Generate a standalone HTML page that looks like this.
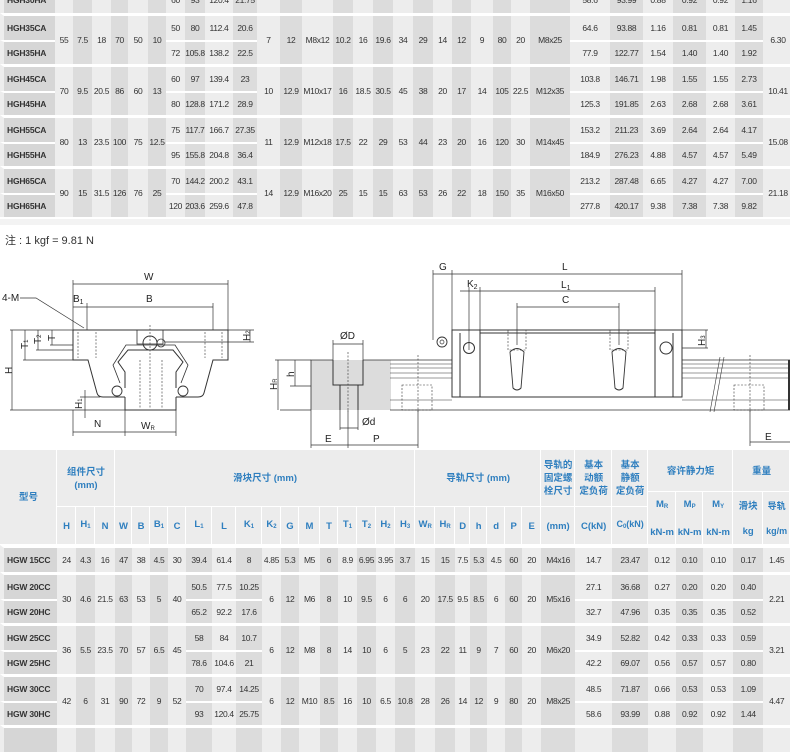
<!DOCTYPE html>
<html><head><meta charset="utf-8"><style>
*{margin:0;padding:0;box-sizing:border-box}
body{width:790px;height:728px;overflow:hidden;background:#fff;position:relative;font-family:"Liberation Sans","Noto Sans CJK SC",sans-serif;color:#333}
table{border-collapse:separate;border-spacing:0;table-layout:fixed;position:absolute;left:0;width:790px}
td{padding:0;text-align:center;vertical-align:middle;font-size:8.5px;white-space:nowrap;overflow:hidden;letter-spacing:-.35px}
col.l{background:#ededed}col.d{background:#dcdcdc}
td.m{text-align:left;font-weight:bold;background:#d6d6d6;border-left:4px solid #ededed;padding-left:3px;font-size:8.5px;letter-spacing:-.2px}
tr.g td{border-top:3px solid #fff}
tr.s td{border-top:2px solid #fff}
tr.g td,tr.f td{height:27px}
tr.s td{height:24px}
#t1 tr.g td.r2{height:51px}
#t2 tr.g td.r2{height:51px}
.h td{background:#ececec;color:#2f7fbf;font-weight:bold;font-size:9.5px;box-shadow:inset -1px 0 #fff,inset 0 -1px #fff;line-height:13px;letter-spacing:0}
.h td sub{font-size:6px;vertical-align:-1px}
.note{position:absolute;left:5px;top:232px;font-size:11px;color:#333}
</style></head><body>

<table id="t1" style="top:-14px">
<colgroup><col style="width:55px" class="l"><col style="width:18px" class="l"><col style="width:19px" class="d"><col style="width:19px" class="l"><col style="width:17px" class="d"><col style="width:20px" class="l"><col style="width:18px" class="d"><col style="width:19px" class="l"><col style="width:20px" class="d"><col style="width:28px" class="l"><col style="width:24px" class="d"><col style="width:23px" class="l"><col style="width:22px" class="d"><col style="width:31px" class="l"><col style="width:20px" class="d"><col style="width:20px" class="l"><col style="width:20px" class="d"><col style="width:20px" class="l"><col style="width:20px" class="d"><col style="width:19px" class="l"><col style="width:19px" class="d"><col style="width:22px" class="l"><col style="width:18px" class="d"><col style="width:19px" class="l"><col style="width:40px" class="d"><col style="width:40px" class="l"><col style="width:33px" class="d"><col style="width:30px" class="l"><col style="width:33px" class="d"><col style="width:29px" class="l"><col style="width:28px" class="d"><col style="width:30px" class="l"></colgroup>
<tr class="f"><td class="m">HGH30HA</td><td></td><td></td><td></td><td></td><td></td><td></td><td>60</td><td>93</td><td>120.4</td><td>21.75</td><td></td><td></td><td></td><td></td><td></td><td></td><td></td><td></td><td></td><td></td><td></td><td></td><td></td><td></td><td>58.6</td><td>93.99</td><td>0.88</td><td>0.92</td><td>0.92</td><td>1.16</td><td></td></tr>
<tr class="g"><td class="m">HGH35CA</td><td class="r2" rowspan="2">55</td><td class="r2" rowspan="2">7.5</td><td class="r2" rowspan="2">18</td><td class="r2" rowspan="2">70</td><td class="r2" rowspan="2">50</td><td class="r2" rowspan="2">10</td><td>50</td><td>80</td><td>112.4</td><td>20.6</td><td class="r2" rowspan="2">7</td><td class="r2" rowspan="2">12</td><td class="r2" rowspan="2">M8x12</td><td class="r2" rowspan="2">10.2</td><td class="r2" rowspan="2">16</td><td class="r2" rowspan="2">19.6</td><td class="r2" rowspan="2">34</td><td class="r2" rowspan="2">29</td><td class="r2" rowspan="2">14</td><td class="r2" rowspan="2">12</td><td class="r2" rowspan="2">9</td><td class="r2" rowspan="2">80</td><td class="r2" rowspan="2">20</td><td class="r2" rowspan="2">M8x25</td><td>64.6</td><td>93.88</td><td>1.16</td><td>0.81</td><td>0.81</td><td>1.45</td><td class="r2" rowspan="2">6.30</td></tr>
<tr class="s"><td class="m">HGH35HA</td><td>72</td><td>105.8</td><td>138.2</td><td>22.5</td><td>77.9</td><td>122.77</td><td>1.54</td><td>1.40</td><td>1.40</td><td>1.92</td></tr>
<tr class="g"><td class="m">HGH45CA</td><td class="r2" rowspan="2">70</td><td class="r2" rowspan="2">9.5</td><td class="r2" rowspan="2">20.5</td><td class="r2" rowspan="2">86</td><td class="r2" rowspan="2">60</td><td class="r2" rowspan="2">13</td><td>60</td><td>97</td><td>139.4</td><td>23</td><td class="r2" rowspan="2">10</td><td class="r2" rowspan="2">12.9</td><td class="r2" rowspan="2">M10x17</td><td class="r2" rowspan="2">16</td><td class="r2" rowspan="2">18.5</td><td class="r2" rowspan="2">30.5</td><td class="r2" rowspan="2">45</td><td class="r2" rowspan="2">38</td><td class="r2" rowspan="2">20</td><td class="r2" rowspan="2">17</td><td class="r2" rowspan="2">14</td><td class="r2" rowspan="2">105</td><td class="r2" rowspan="2">22.5</td><td class="r2" rowspan="2">M12x35</td><td>103.8</td><td>146.71</td><td>1.98</td><td>1.55</td><td>1.55</td><td>2.73</td><td class="r2" rowspan="2">10.41</td></tr>
<tr class="s"><td class="m">HGH45HA</td><td>80</td><td>128.8</td><td>171.2</td><td>28.9</td><td>125.3</td><td>191.85</td><td>2.63</td><td>2.68</td><td>2.68</td><td>3.61</td></tr>
<tr class="g"><td class="m">HGH55CA</td><td class="r2" rowspan="2">80</td><td class="r2" rowspan="2">13</td><td class="r2" rowspan="2">23.5</td><td class="r2" rowspan="2">100</td><td class="r2" rowspan="2">75</td><td class="r2" rowspan="2">12.5</td><td>75</td><td>117.7</td><td>166.7</td><td>27.35</td><td class="r2" rowspan="2">11</td><td class="r2" rowspan="2">12.9</td><td class="r2" rowspan="2">M12x18</td><td class="r2" rowspan="2">17.5</td><td class="r2" rowspan="2">22</td><td class="r2" rowspan="2">29</td><td class="r2" rowspan="2">53</td><td class="r2" rowspan="2">44</td><td class="r2" rowspan="2">23</td><td class="r2" rowspan="2">20</td><td class="r2" rowspan="2">16</td><td class="r2" rowspan="2">120</td><td class="r2" rowspan="2">30</td><td class="r2" rowspan="2">M14x45</td><td>153.2</td><td>211.23</td><td>3.69</td><td>2.64</td><td>2.64</td><td>4.17</td><td class="r2" rowspan="2">15.08</td></tr>
<tr class="s"><td class="m">HGH55HA</td><td>95</td><td>155.8</td><td>204.8</td><td>36.4</td><td>184.9</td><td>276.23</td><td>4.88</td><td>4.57</td><td>4.57</td><td>5.49</td></tr>
<tr class="g"><td class="m">HGH65CA</td><td class="r2" rowspan="2">90</td><td class="r2" rowspan="2">15</td><td class="r2" rowspan="2">31.5</td><td class="r2" rowspan="2">126</td><td class="r2" rowspan="2">76</td><td class="r2" rowspan="2">25</td><td>70</td><td>144.2</td><td>200.2</td><td>43.1</td><td class="r2" rowspan="2">14</td><td class="r2" rowspan="2">12.9</td><td class="r2" rowspan="2">M16x20</td><td class="r2" rowspan="2">25</td><td class="r2" rowspan="2">15</td><td class="r2" rowspan="2">15</td><td class="r2" rowspan="2">63</td><td class="r2" rowspan="2">53</td><td class="r2" rowspan="2">26</td><td class="r2" rowspan="2">22</td><td class="r2" rowspan="2">18</td><td class="r2" rowspan="2">150</td><td class="r2" rowspan="2">35</td><td class="r2" rowspan="2">M16x50</td><td>213.2</td><td>287.48</td><td>6.65</td><td>4.27</td><td>4.27</td><td>7.00</td><td class="r2" rowspan="2">21.18</td></tr>
<tr class="s"><td class="m">HGH65HA</td><td>120</td><td>203.6</td><td>259.6</td><td>47.8</td><td>277.8</td><td>420.17</td><td>9.38</td><td>7.38</td><td>7.38</td><td>9.82</td></tr>
</table>
<div style="position:absolute;left:0;top:219px;width:790px;height:6px;background:#f3f3f3"></div>
<div class="note">注 : 1 kgf = 9.81 N</div>

<svg style="position:absolute;left:0;top:250px" width="790" height="200" viewBox="0 250 790 200" font-family="Liberation Sans, sans-serif" font-size="10" fill="none" stroke="#333">
<g stroke-width=".7">
<line x1="73" y1="284" x2="228" y2="284"/><line x1="73" y1="280" x2="73" y2="330"/><line x1="228" y1="280" x2="228" y2="330"/>
<line x1="73" y1="307" x2="213" y2="307"/><line x1="87" y1="303" x2="87" y2="330"/><line x1="213" y1="303" x2="213" y2="330"/>
<polyline points="20,298 36,298 84,328"/>
<line x1="10" y1="330" x2="73" y2="330"/><line x1="10" y1="410" x2="125" y2="410"/>
<line x1="12" y1="330" x2="12" y2="410"/><line x1="25" y1="330" x2="25" y2="360"/><line x1="38" y1="330" x2="38" y2="350"/><line x1="52" y1="330" x2="52" y2="345"/>
<line x1="23" y1="360" x2="73" y2="360"/><line x1="36" y1="350" x2="73" y2="350"/><line x1="50" y1="345" x2="73" y2="345"/>
<line x1="228" y1="330" x2="254" y2="330"/><line x1="165" y1="342" x2="254" y2="342"/><line x1="250" y1="330" x2="250" y2="342"/>
<line x1="85" y1="390" x2="85" y2="418"/><line x1="80" y1="397" x2="100" y2="397"/>
<line x1="73" y1="410" x2="73" y2="436"/><line x1="125" y1="410" x2="125" y2="436"/><line x1="176" y1="410" x2="176" y2="436"/>
<line x1="73" y1="432" x2="176" y2="432"/>
</g>
<path stroke-width="1" d="M73,330 H228 V360 H213 L204,393 Q203,397 198,397 H176 M73,330 V360 H88 L97,393 Q98,397 103,397 H125"/>
<path stroke-width="1" d="M125,397 V410 H176 V397 M125,388 V372 L118,362 L128,350 H173 L183,362 L176,372 V388"/>
<path stroke-width=".8" d="M120,383 L113,365 L126,345 H175 L188,365 L181,383"/>
<rect x="137" y="330" width="26" height="14" stroke-width=".8"/>
<circle cx="150" cy="343" r="7" stroke-width="1"/><circle cx="161" cy="343" r="4" stroke-width=".8"/>
<circle cx="117" cy="391" r="5" stroke-width=".9"/><circle cx="183" cy="391" r="5" stroke-width=".9"/>
<g stroke-dasharray="2,1.5" stroke-width=".6"><line x1="78" y1="332" x2="78" y2="358"/><line x1="96" y1="332" x2="96" y2="358"/><line x1="205" y1="332" x2="205" y2="358"/><line x1="222" y1="332" x2="222" y2="358"/><line x1="140" y1="360" x2="140" y2="408"/><line x1="162" y1="360" x2="162" y2="408"/><line x1="150" y1="325" x2="150" y2="408"/></g>
<g stroke-width=".7">
<line x1="433" y1="274" x2="682" y2="274"/><line x1="433" y1="270" x2="433" y2="340"/><line x1="452" y1="270" x2="452" y2="330"/><line x1="682" y1="270" x2="682" y2="330"/>
<line x1="460" y1="291" x2="655" y2="291"/><line x1="469" y1="287" x2="469" y2="350"/><line x1="480" y1="287" x2="480" y2="330"/><line x1="655" y1="287" x2="655" y2="330"/>
<line x1="517" y1="307" x2="619" y2="307"/><line x1="517" y1="303" x2="517" y2="345"/><line x1="619" y1="303" x2="619" y2="345"/>
<line x1="682" y1="330" x2="708" y2="330"/><line x1="682" y1="348" x2="708" y2="348"/><line x1="706" y1="330" x2="706" y2="348"/>
<line x1="333" y1="344" x2="363" y2="344"/><line x1="333" y1="340" x2="333" y2="360"/><line x1="363" y1="340" x2="363" y2="360"/>
<line x1="275" y1="360" x2="311" y2="360"/><line x1="290" y1="386" x2="333" y2="386"/><line x1="280" y1="410" x2="311" y2="410"/>
<line x1="295" y1="360" x2="295" y2="386"/><line x1="278" y1="360" x2="278" y2="410"/>
<line x1="311" y1="410" x2="311" y2="448"/><line x1="348" y1="410" x2="348" y2="448"/><line x1="418" y1="410" x2="418" y2="448"/>
<line x1="311" y1="445" x2="418" y2="445"/><line x1="340" y1="428" x2="358" y2="428"/><line x1="340" y1="410" x2="340" y2="430"/><line x1="358" y1="410" x2="358" y2="430"/>
<line x1="750" y1="410" x2="750" y2="446"/><line x1="750" y1="442" x2="790" y2="442"/>
</g>
<rect x="311" y="360" width="80" height="50" fill="#dcdcdc" stroke="none"/>
<path stroke-width="1" d="M333,360 V385 H363 V360 M340,385 V410 M358,385 V410"/>
<path stroke-width=".8" d="M390,360 H452 M682,360 H790 M390,410 H790 M311,410 V360 H333 M363,360 H390"/>
<g stroke-width=".6"><line x1="390" y1="364" x2="452" y2="364"/><line x1="390" y1="368" x2="452" y2="368"/><line x1="390" y1="373" x2="452" y2="373"/><line x1="390" y1="378" x2="452" y2="378"/><line x1="390" y1="400" x2="452" y2="400"/>
<line x1="682" y1="364" x2="790" y2="364"/><line x1="682" y1="368" x2="790" y2="368"/><line x1="682" y1="373" x2="790" y2="373"/><line x1="682" y1="378" x2="790" y2="378"/><line x1="682" y1="400" x2="790" y2="400"/>
<line x1="452" y1="397" x2="682" y2="397"/><line x1="710" y1="412" x2="720" y2="357"/><line x1="714" y1="412" x2="724" y2="357"/></g>
<line x1="789" y1="360" x2="789" y2="410" stroke-width="2"/>
<path stroke-width="1" d="M452,330 H682 V397 H452 Z M480,330 V397 M655,330 V397 M460,333 V397 M673,333 V397 M480,333 H655"/>
<circle cx="469" cy="348" r="5.5" stroke-width="1"/><circle cx="666" cy="348" r="6" stroke-width="1"/>
<path stroke-width=".9" d="M510,352 Q517,345 524,352 L521,388 Q517,392 513,388 Z M612,352 Q619,345 626,352 L623,388 Q619,392 615,388 Z"/>
<g stroke-dasharray="2,1.5" stroke-width=".6"><rect x="508" y="330" width="18" height="20"/><rect x="610" y="330" width="18" height="20"/><rect x="402" y="385" width="30" height="25"/><rect x="734" y="385" width="30" height="25"/><line x1="418" y1="355" x2="418" y2="412"/><line x1="750" y1="355" x2="750" y2="412"/><line x1="348" y1="352" x2="348" y2="412"/></g>
<circle cx="442" cy="342" r="5" stroke-width=".9"/><circle cx="442" cy="342" r="2" stroke-width=".7"/>
<g fill="#222" stroke="none" font-size="10">
<text x="144" y="280">W</text><text x="146" y="302">B</text><text x="73" y="302">B<tspan font-size="7" dy="2">1</tspan></text><text x="2" y="301">4-M</text>
<text x="4" y="374" transform="rotate(-90 8 370)">H</text>
<text x="20" y="349" transform="rotate(-90 24 345)">T<tspan font-size="6">1</tspan></text>
<text x="33" y="344" transform="rotate(-90 37 340)">T<tspan font-size="6">2</tspan></text>
<text x="47" y="341" transform="rotate(-90 51 337)">T</text>
<text x="241" y="340" transform="rotate(-90 246 336)">H<tspan font-size="6">2</tspan></text>
<text x="73" y="408" transform="rotate(-90 78 404)">H<tspan font-size="6">1</tspan></text>
<text x="94" y="427">N</text><text x="141" y="429">W<tspan font-size="6" dy="1">R</tspan></text>
<text x="439" y="270">G</text><text x="562" y="270">L</text><text x="467" y="287">K<tspan font-size="7" dy="2">2</tspan></text><text x="561" y="288">L<tspan font-size="7" dy="2">1</tspan></text><text x="562" y="303">C</text>
<text x="693" y="346" transform="rotate(-90 699 340)">H<tspan font-size="6">3</tspan></text>
<text x="340" y="339">ØD</text><text x="362" y="425">Ød</text><text x="325" y="442">E</text><text x="373" y="442">P</text><text x="765" y="440">E</text>
<text x="286" y="377" transform="rotate(-90 290 373)">h</text>
<text x="268" y="389" transform="rotate(-90 273 385)">H<tspan font-size="6">R</tspan></text>
</g>
</svg>

<table id="t2" style="top:450px">
<colgroup><col style="width:57px" class="l"><col style="width:19px" class="l"><col style="width:19px" class="d"><col style="width:20px" class="l"><col style="width:17px" class="d"><col style="width:18px" class="l"><col style="width:18px" class="d"><col style="width:18px" class="l"><col style="width:26px" class="d"><col style="width:24px" class="l"><col style="width:26px" class="d"><col style="width:19px" class="l"><col style="width:18px" class="d"><col style="width:21px" class="l"><col style="width:18px" class="d"><col style="width:19px" class="l"><col style="width:19px" class="d"><col style="width:19px" class="l"><col style="width:20px" class="d"><col style="width:20px" class="l"><col style="width:20px" class="d"><col style="width:15px" class="l"><col style="width:17px" class="d"><col style="width:18px" class="l"><col style="width:17px" class="d"><col style="width:19px" class="l"><col style="width:34px" class="d"><col style="width:37px" class="l"><col style="width:36px" class="d"><col style="width:28px" class="l"><col style="width:27px" class="d"><col style="width:30px" class="l"><col style="width:30px" class="d"><col style="width:27px" class="l"></colgroup>
<tr class="h" style="height:42px"><td rowspan="3" style="height:95px">型号</td><td colspan="3" rowspan="2">组件尺寸<br>(mm)</td><td colspan="15" rowspan="2">滑块尺寸 (mm)</td><td colspan="7" rowspan="2">导轨尺寸 (mm)</td><td rowspan="2">导轨的<br>固定螺<br>栓尺寸</td><td rowspan="2">基本<br>动额<br>定负荷</td><td rowspan="2">基本<br>静额<br>定负荷</td><td colspan="3" style="height:42px">容许静力矩</td><td colspan="2">重量</td></tr>
<tr class="h" style="height:15px"><td rowspan="2" style="height:53px;line-height:25px">M<sub>R</sub><br>kN-m</td><td rowspan="2" style="line-height:25px">M<sub>P</sub><br>kN-m</td><td rowspan="2" style="line-height:25px">M<sub>Y</sub><br>kN-m</td><td rowspan="2" style="line-height:25px">滑块<br>kg</td><td rowspan="2" style="line-height:25px;font-size:9px">导轨<br>kg/m</td></tr>
<tr class="h" style="height:38px"><td style="height:38px">H</td><td>H<sub>1</sub></td><td>N</td><td>W</td><td>B</td><td>B<sub>1</sub></td><td>C</td><td>L<sub>1</sub></td><td>L</td><td>K<sub>1</sub></td><td>K<sub>2</sub></td><td>G</td><td>M</td><td>T</td><td>T<sub>1</sub></td><td>T<sub>2</sub></td><td>H<sub>2</sub></td><td>H<sub>3</sub></td><td>W<sub>R</sub></td><td>H<sub>R</sub></td><td>D</td><td>h</td><td>d</td><td>P</td><td>E</td><td>(mm)</td><td>C(kN)</td><td style="font-size:9px">C<sub>0</sub>(kN)</td></tr>
<tr class="g"><td class="m" style="height:25px">HGW 15CC</td><td>24</td><td>4.3</td><td>16</td><td>47</td><td>38</td><td>4.5</td><td>30</td><td>39.4</td><td>61.4</td><td>8</td><td>4.85</td><td>5.3</td><td>M5</td><td>6</td><td>8.9</td><td>6.95</td><td>3.95</td><td>3.7</td><td>15</td><td>15</td><td>7.5</td><td>5.3</td><td>4.5</td><td>60</td><td>20</td><td>M4x16</td><td>14.7</td><td>23.47</td><td>0.12</td><td>0.10</td><td>0.10</td><td>0.17</td><td>1.45</td></tr>
<tr class="g"><td class="m">HGW 20CC</td><td class="r2" rowspan="2">30</td><td class="r2" rowspan="2">4.6</td><td class="r2" rowspan="2">21.5</td><td class="r2" rowspan="2">63</td><td class="r2" rowspan="2">53</td><td class="r2" rowspan="2">5</td><td class="r2" rowspan="2">40</td><td>50.5</td><td>77.5</td><td>10.25</td><td class="r2" rowspan="2">6</td><td class="r2" rowspan="2">12</td><td class="r2" rowspan="2">M6</td><td class="r2" rowspan="2">8</td><td class="r2" rowspan="2">10</td><td class="r2" rowspan="2">9.5</td><td class="r2" rowspan="2">6</td><td class="r2" rowspan="2">6</td><td class="r2" rowspan="2">20</td><td class="r2" rowspan="2">17.5</td><td class="r2" rowspan="2">9.5</td><td class="r2" rowspan="2">8.5</td><td class="r2" rowspan="2">6</td><td class="r2" rowspan="2">60</td><td class="r2" rowspan="2">20</td><td class="r2" rowspan="2">M5x16</td><td>27.1</td><td>36.68</td><td>0.27</td><td>0.20</td><td>0.20</td><td>0.40</td><td class="r2" rowspan="2">2.21</td></tr>
<tr class="s"><td class="m">HGW 20HC</td><td>65.2</td><td>92.2</td><td>17.6</td><td>32.7</td><td>47.96</td><td>0.35</td><td>0.35</td><td>0.35</td><td>0.52</td></tr>
<tr class="g"><td class="m">HGW 25CC</td><td class="r2" rowspan="2">36</td><td class="r2" rowspan="2">5.5</td><td class="r2" rowspan="2">23.5</td><td class="r2" rowspan="2">70</td><td class="r2" rowspan="2">57</td><td class="r2" rowspan="2">6.5</td><td class="r2" rowspan="2">45</td><td>58</td><td>84</td><td>10.7</td><td class="r2" rowspan="2">6</td><td class="r2" rowspan="2">12</td><td class="r2" rowspan="2">M8</td><td class="r2" rowspan="2">8</td><td class="r2" rowspan="2">14</td><td class="r2" rowspan="2">10</td><td class="r2" rowspan="2">6</td><td class="r2" rowspan="2">5</td><td class="r2" rowspan="2">23</td><td class="r2" rowspan="2">22</td><td class="r2" rowspan="2">11</td><td class="r2" rowspan="2">9</td><td class="r2" rowspan="2">7</td><td class="r2" rowspan="2">60</td><td class="r2" rowspan="2">20</td><td class="r2" rowspan="2">M6x20</td><td>34.9</td><td>52.82</td><td>0.42</td><td>0.33</td><td>0.33</td><td>0.59</td><td class="r2" rowspan="2">3.21</td></tr>
<tr class="s"><td class="m">HGW 25HC</td><td>78.6</td><td>104.6</td><td>21</td><td>42.2</td><td>69.07</td><td>0.56</td><td>0.57</td><td>0.57</td><td>0.80</td></tr>
<tr class="g"><td class="m">HGW 30CC</td><td class="r2" rowspan="2">42</td><td class="r2" rowspan="2">6</td><td class="r2" rowspan="2">31</td><td class="r2" rowspan="2">90</td><td class="r2" rowspan="2">72</td><td class="r2" rowspan="2">9</td><td class="r2" rowspan="2">52</td><td>70</td><td>97.4</td><td>14.25</td><td class="r2" rowspan="2">6</td><td class="r2" rowspan="2">12</td><td class="r2" rowspan="2">M10</td><td class="r2" rowspan="2">8.5</td><td class="r2" rowspan="2">16</td><td class="r2" rowspan="2">10</td><td class="r2" rowspan="2">6.5</td><td class="r2" rowspan="2">10.8</td><td class="r2" rowspan="2">28</td><td class="r2" rowspan="2">26</td><td class="r2" rowspan="2">14</td><td class="r2" rowspan="2">12</td><td class="r2" rowspan="2">9</td><td class="r2" rowspan="2">80</td><td class="r2" rowspan="2">20</td><td class="r2" rowspan="2">M8x25</td><td>48.5</td><td>71.87</td><td>0.66</td><td>0.53</td><td>0.53</td><td>1.09</td><td class="r2" rowspan="2">4.47</td></tr>
<tr class="s"><td class="m">HGW 30HC</td><td>93</td><td>120.4</td><td>25.75</td><td>58.6</td><td>93.99</td><td>0.88</td><td>0.92</td><td>0.92</td><td>1.44</td></tr>
<tr class="g"><td class="m"></td><td></td><td></td><td></td><td></td><td></td><td></td><td></td><td></td><td></td><td></td><td></td><td></td><td></td><td></td><td></td><td></td><td></td><td></td><td></td><td></td><td></td><td></td><td></td><td></td><td></td><td></td><td></td><td></td><td></td><td></td><td></td><td></td><td></td></tr>
</table>
</body></html>
